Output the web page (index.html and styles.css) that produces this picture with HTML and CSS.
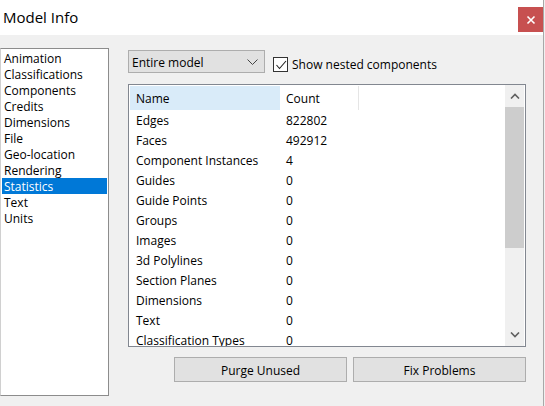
FILE: index.html
```html
<!DOCTYPE html>
<html>
<head>
<meta charset="utf-8">
<link rel="stylesheet" href="styles.css">
</head>
<body>
<div class="window">
  <div class="titlebar">
    <div class="title">Model Info</div>
    <div class="close"><svg width="10" height="10" viewBox="0 0 10 10"><path d="M1.5 1.5 L8.5 8.5 M8.5 1.5 L1.5 8.5" stroke="#fff" stroke-width="1.6"/></svg></div>
  </div>
  <div class="content">
    <ul class="nav">
      <li>Animation</li>
      <li>Classifications</li>
      <li>Components</li>
      <li>Credits</li>
      <li>Dimensions</li>
      <li>File</li>
      <li>Geo-location</li>
      <li>Rendering</li>
      <li class="sel">Statistics</li>
      <li>Text</li>
      <li>Units</li>
    </ul>
    <div class="panel">
      <div class="toolbar">
        <div class="select"><span>Entire model</span><svg width="11" height="7" viewBox="0 0 11 7"><path d="M0.5 0.5 L5.5 5.5 L10.5 0.5" fill="none" stroke="#444" stroke-width="1"/></svg></div>
        <label class="check"><span class="box"><svg width="12" height="12" viewBox="0 0 12 12"><path d="M1.5 6 L4.5 9.5 L11 2" fill="none" stroke="#222" stroke-width="1.1"/></svg></span><span>Show nested components</span></label>
      </div>
      <div class="table">
        <div class="grid">
          <div class="head">
            <div class="hname">Name</div>
            <div class="hcount">Count</div>
            <div class="hrest"></div>
          </div>
          <div class="row"><span class="n">Edges</span><span class="c">822802</span></div>
          <div class="row"><span class="n">Faces</span><span class="c">492912</span></div>
          <div class="row"><span class="n">Component Instances</span><span class="c">4</span></div>
          <div class="row"><span class="n">Guides</span><span class="c">0</span></div>
          <div class="row"><span class="n">Guide Points</span><span class="c">0</span></div>
          <div class="row"><span class="n">Groups</span><span class="c">0</span></div>
          <div class="row"><span class="n">Images</span><span class="c">0</span></div>
          <div class="row"><span class="n">3d Polylines</span><span class="c">0</span></div>
          <div class="row"><span class="n">Section Planes</span><span class="c">0</span></div>
          <div class="row"><span class="n">Dimensions</span><span class="c">0</span></div>
          <div class="row"><span class="n">Text</span><span class="c">0</span></div>
          <div class="row"><span class="n">Classification Types</span><span class="c">0</span></div>
        </div>
        <div class="scroll">
          <div class="arrow"><svg width="10" height="6" viewBox="0 0 10 6"><path d="M1 5.5 L5 1.5 L9 5.5" fill="none" stroke="#606060" stroke-width="1.6"/></svg></div>
          <div class="thumb"></div>
          <div class="track"></div>
          <div class="arrow"><svg width="10" height="6" viewBox="0 0 10 6"><path d="M1 0.5 L5 4.5 L9 0.5" fill="none" stroke="#606060" stroke-width="1.6"/></svg></div>
        </div>
      </div>
      <div class="buttons">
        <div class="btn">Purge Unused</div>
        <div class="btn">Fix Problems</div>
      </div>
    </div>
  </div>
</div>
</body>
</html>
```

FILE: styles.css
```css
* { box-sizing: border-box; }
html, body { margin: 0; padding: 0; }
body {
  width: 545px;
  height: 406px;
  overflow: hidden;
  background: #f0f0f0;
  font-family: "Open Sans", "Noto Sans", sans-serif;
  font-size: 12px;
  color: #000;
}
.window {
  width: 544px;
  height: 406px;
  border-right: 1px solid #a8a8a8;
  background: #f0f0f0;
}
.titlebar {
  height: 35px;
  background: #fff;
  display: flex;
  align-items: flex-start;
  justify-content: space-between;
}
.title {
  font-size: 15px;
  padding-left: 3px;
  padding-top: 7px;
  color: #000;
}
.close {
  width: 25px;
  height: 25px;
  margin-top: 7px;
  background: #c75050;
  display: flex;
  align-items: center;
  justify-content: center;
}
.content {
  display: flex;
  align-items: flex-start;
}
.nav {
  list-style: none;
  margin: 13px 0 0 0;
  padding: 1px;
  width: 109px;
  height: 348px;
  background: #fff;
  border: 1px solid #8c8c8c;
  border-left-color: #d0d0d0;
}
.nav li {
  height: 16px;
  line-height: 18px;
  padding-left: 2px;
}
.nav li.sel {
  background: #0078d7;
  color: #fff;
}
.panel {
  margin-left: 19px;
  margin-top: 15px;
  width: 398px;
}
.toolbar {
  display: flex;
  align-items: center;
  height: 23px;
}
.select {
  width: 137px;
  height: 23px;
  background: #e1e1e1;
  border: 1px solid #adadad;
  display: flex;
  align-items: center;
  justify-content: space-between;
  padding: 1px 6px 0 3px;
}
.check {
  display: flex;
  align-items: center;
  margin-left: 8px;
  margin-top: 6px;
}
.box {
  width: 15px;
  height: 15px;
  border: 1px solid #333;
  background: #fff;
  display: flex;
  align-items: center;
  justify-content: center;
  margin-right: 4px;
}
.table {
  margin-top: 11px;
  height: 263px;
  border: 1px solid #828790;
  background: #fff;
  display: flex;
}
.grid {
  flex: 1;
  padding: 1px 0 0 1px;
  overflow: hidden;
}
.head {
  display: flex;
  height: 24px;
  align-items: stretch;
}
.hname {
  width: 150px;
  background: #d9ebf9;
  padding-left: 6px;
  line-height: 26px;
}
.hcount {
  width: 79px;
  border-right: 1px solid #e5e5e5;
  padding-left: 6px;
  line-height: 26px;
}
.row {
  display: flex;
  height: 20px;
  line-height: 22px;
}
.row .n { width: 150px; padding-left: 6px; }
.row .c { padding-left: 6px; }
.scroll {
  width: 19px;
  margin-right: 1px;
  background: #f0f0f0;
  display: flex;
  flex-direction: column;
}
.arrow {
  height: 22px;
  display: flex;
  align-items: center;
  justify-content: center;
}
.thumb {
  height: 141px;
  background: #cdcdcd;
}
.track { flex: 1; }
.buttons {
  display: flex;
  justify-content: flex-end;
  gap: 6px;
  margin-top: 10px;
}
.btn {
  width: 173px;
  height: 25px;
  background: #e1e1e1;
  border: 1px solid #adadad;
  display: flex;
  align-items: center;
  justify-content: center;
  padding-top: 2px;
}
```
